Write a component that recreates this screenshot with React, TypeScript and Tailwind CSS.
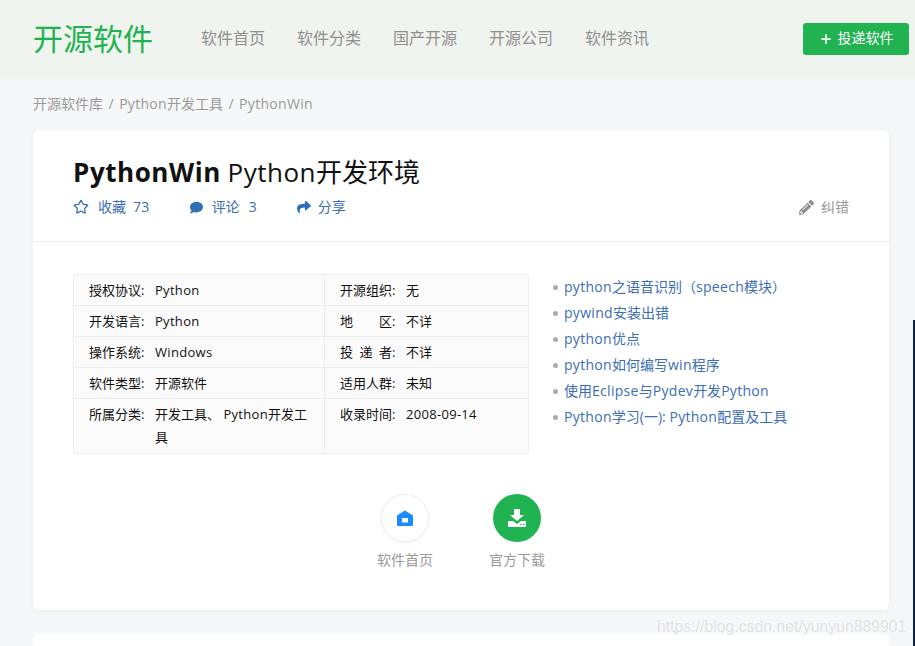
import { Plus, Star } from "lucide-react";
import { FaComment, FaShare, FaPencilAlt } from "react-icons/fa";

const navItems = ["软件首页", "软件分类", "国产开源", "开源公司", "软件资讯"];

const related = [
  "python之语音识别（speech模块）",
  "pywind安装出错",
  "python优点",
  "python如何编写win程序",
  "使用Eclipse与Pydev开发Python",
  "Python学习(一): Python配置及工具",
];

// latin runs are set a bit wider than the cjk around them
function Latin({ text, className }: { text: string; className: string }) {
  return (
    <>
      {text.split(/([A-Za-z0-9-]+)/).map((part, i) =>
        i % 2 === 1 ? (
          <span key={i} className={className}>
            {part}
          </span>
        ) : (
          part
        )
      )}
    </>
  );
}

function Label({ chars }: { chars: string[] }) {
  return (
    <span className="flex w-[66px] shrink-0">
      <span className="flex w-[52px] justify-between">
        {chars.map((c) => (
          <span key={c}>{c}</span>
        ))}
      </span>
      :
    </span>
  );
}

function InfoRow({ left, leftValue, right, rightValue, tall }: { left: string[]; leftValue: string; right: string[]; rightValue: string; tall?: boolean }) {
  return (
    <div className={`flex ${tall ? "h-[54px]" : "h-[31px] border-b border-[#eeeeee]"}`}>
      <div className={`flex w-[251px] shrink-0 border-r border-[#eeeeee] pl-[15px] pr-[16px] ${tall ? "pt-[4px] leading-[23px]" : "pt-[5px] leading-[20px]"}`}>
        <Label chars={left} />
        <span>
          <Latin text={leftValue} className="tracking-[0.3px]" />
        </span>
      </div>
      <div className={`flex flex-1 pl-[15px] ${tall ? "pt-[4px] leading-[23px]" : "pt-[5px] leading-[20px]"}`}>
        <Label chars={right} />
        <span>
          <Latin text={rightValue} className="tracking-[0.3px]" />
        </span>
      </div>
    </div>
  );
}

export default function App() {
  return (
    <div className="relative h-[646px] overflow-hidden bg-[#f6f7f9] font-['Open_Sans','Noto_Sans_CJK_SC',sans-serif] text-[#111111]">
      <header className="flex h-[78px] items-center bg-[#eff4ee] pl-[33px] pr-[6px]">
        <a className="text-[30px] leading-none text-[#21b351]">开源软件</a>
        <nav className="ml-[48px] flex gap-[32px] pb-[2px] text-[16px] text-[#8f8f8f]">
          {navItems.map((item) => (
            <a key={item}>{item}</a>
          ))}
        </nav>
        <button className="ml-auto flex h-[32px] w-[106px] items-center justify-center gap-[5px] rounded-[3px] bg-[#21b351] text-white">
          <Plus size={14} strokeWidth={3} />
          <span className="pb-[3px] text-[14px]">投递软件</span>
        </button>
      </header>

      <div className="flex h-[52px] items-center gap-[5.5px] pb-[2px] pl-[33px] text-[14px] text-[#999999]">
        <span>开源软件库</span>
        <span>/</span>
        <span>
          <Latin text="Python开发工具" className="tracking-[0.3px]" />
        </span>
        <span>/</span>
        <span className="tracking-[0.3px]">PythonWin</span>
      </div>

      <main className="mx-[33px] h-[480px] w-[856px] rounded-[6px] bg-white shadow-[0_1px_6px_rgba(0,0,0,0.04)]">
        <div className="h-[112px] border-b border-[#eeeeee] px-[40px] pt-[22px]">
          <h1 className="text-[26px] leading-[40px]">
            <strong className="font-bold tracking-[0.55px]">PythonWin</strong> <Latin text="Python开发环境" className="tracking-[0.5px]" />
          </h1>
          <div className="mt-[5px] flex items-center text-[14px] leading-[20px] text-[#3b6eb5]">
            <Star size={16} strokeWidth={1.8} className="text-[#2f6db5]" />
            <span className="ml-[9px]">收藏</span>
            <span className="ml-[7px] tracking-[0.3px]">73</span>
            <FaComment size={13} className="ml-[40px] text-[#2f6db5]" />
            <span className="ml-[9px]">评论</span>
            <span className="ml-[9px]">3</span>
            <FaShare size={14} className="ml-[40px] text-[#2f6db5]" />
            <span className="ml-[7px]">分享</span>
            <FaPencilAlt size={15} className="ml-auto text-[#8f8f8f]" />
            <span className="ml-[7px] text-[#999999]">纠错</span>
          </div>
        </div>

        <div className="flex px-[40px] pt-[32px]">
          <div className="w-[456px] shrink-0 overflow-hidden rounded-[3px] border border-[#eeeeee] bg-[#fbfbfb] text-[13px]">
            <InfoRow left={["授", "权", "协", "议"]} leftValue="Python" right={["开", "源", "组", "织"]} rightValue="无" />
            <InfoRow left={["开", "发", "语", "言"]} leftValue="Python" right={["地", "区"]} rightValue="不详" />
            <InfoRow left={["操", "作", "系", "统"]} leftValue="Windows" right={["投", "递", "者"]} rightValue="不详" />
            <InfoRow left={["软", "件", "类", "型"]} leftValue="开源软件" right={["适", "用", "人", "群"]} rightValue="未知" />
            <InfoRow tall left={["所", "属", "分", "类"]} leftValue="开发工具、 Python开发工具" right={["收", "录", "时", "间"]} rightValue="2008-09-14" />
          </div>
          <ul className="ml-[24px] -mt-[1px] text-[14px] text-[#3b6eb5]">
            {related.map((item) => (
              <li key={item} className="flex h-[26px] items-center">
                <span className="mr-[6px] mt-[2px] h-[5px] w-[5px] rounded-full bg-[#aaaaaa]" />
                <span>
                  <Latin text={item} className="tracking-[0.3px]" />
                </span>
              </li>
            ))}
          </ul>
        </div>

        <div className="mt-[40px] flex justify-center gap-[56px] text-[14px] text-[#999999]">
          <a className="flex w-[56px] flex-col items-center gap-[7px]">
            <span className="flex h-[48px] w-[48px] items-center justify-center rounded-full border border-[#eeeeee] bg-white shadow-[0_1px_4px_rgba(0,0,0,0.05)]">
              <svg width="16" height="16" viewBox="0 0 16 16">
                <path d="M8 0.5 L16 5.5 V15 Q16 16 15 16 H1 Q0 16 0 15 V5.5 Z" fill="#1a8cff" />
                <rect x="5" y="8" width="6" height="4.5" fill="#ffffff" />
              </svg>
            </span>
            软件首页
          </a>
          <a className="flex w-[56px] flex-col items-center gap-[7px]">
            <span className="flex h-[48px] w-[48px] items-center justify-center rounded-full bg-[#21b351]">
              <svg width="18" height="18" viewBox="0 0 18 18">
                <path d="M6 0 H12 V6 H16 L9 12 L2 6 H6 Z" fill="#ffffff" />
                <path d="M0 12 H5 L9 15 L13 12 H18 V18 H0 Z" fill="#ffffff" />
                <rect x="12" y="15" width="1.5" height="1" fill="#21b351" />
                <rect x="15" y="15" width="1.5" height="1" fill="#21b351" />
              </svg>
            </span>
            官方下载
          </a>
        </div>
      </main>

      <section className="mx-[33px] mt-[24px] h-[40px] w-[856px] rounded-[6px] bg-white" />

      <span className="absolute left-[657px] top-[616px] whitespace-nowrap font-['Liberation_Sans',sans-serif] text-[15.8px] leading-[22px] text-[#bbbbbb]/35 blur-[0.4px]">
        https://blog.csdn.net/yunyun889901
      </span>
      <div className="absolute bottom-0 right-0 top-[320px] w-[2px] bg-[#0f1f4b]" />
    </div>
  );
}
